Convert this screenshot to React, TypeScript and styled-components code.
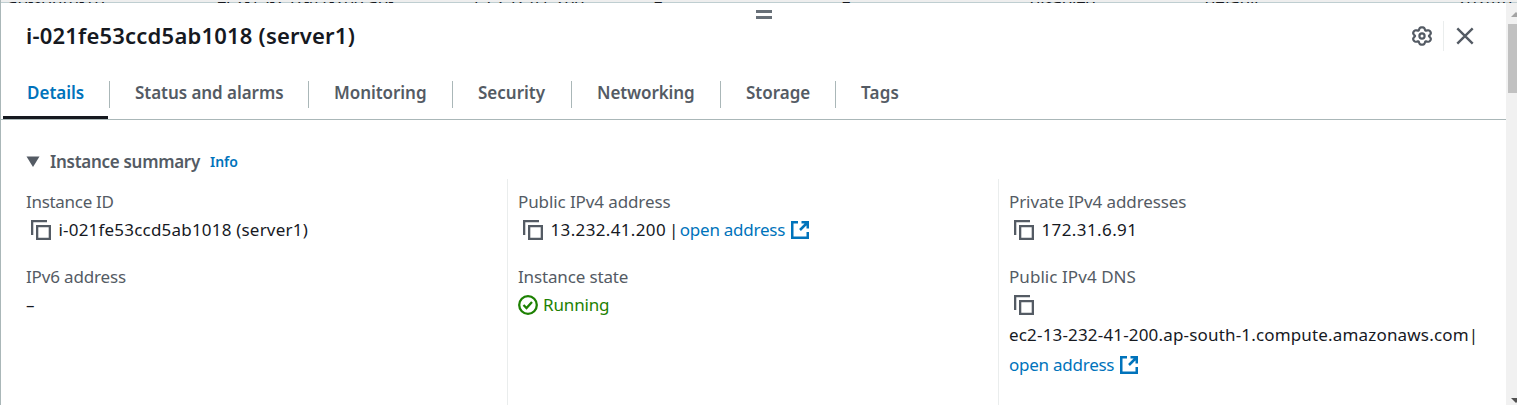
import React from "react";
import styled, { createGlobalStyle } from "styled-components";

const Global = createGlobalStyle`
  *{box-sizing:border-box}
  html,body{margin:0;height:405px;overflow:hidden;background:#fff}
  body{font-family:"Noto Sans","Open Sans",sans-serif;font-size:17px;color:#16191f}
`;

const Screen = styled.div`
  height:405px; display:flex; flex-direction:column; overflow:hidden; border-left:1px solid #aab7b8;
`;
const Strip = styled.div`
  height:3px; flex:none; background:#eeeeee; border-bottom:1px solid #bfced1; position:relative;
`;
const Behind = styled.span<{ $x: number }>`
  position:absolute; left:${p => p.$x}px; top:2px; height:1px; overflow:hidden; white-space:nowrap;
  font-size:17px; line-height:20px; color:#16191f;
  span{display:block;margin-top:-11px}
`;
const Body = styled.div`flex:1; min-height:0; display:flex;`;
const Panel = styled.main`flex:1; min-width:0; display:flex; flex-direction:column; overflow:hidden; position:relative;`;
const Grip = styled.div`
  position:absolute; left:755px; top:7px; width:16px; height:9px;
  border-top:3px solid #687078; border-bottom:3px solid #687078;
`;
const Header = styled.header`
  height:66px; flex:none; display:flex; align-items:center; justify-content:space-between; padding:0 31px 0 25px;
`;
const T = styled.span<{ $ls?: number }>`letter-spacing:${p => p.$ls ?? 0}px; white-space:pre;`;
const Title = styled.h1`margin:0; padding-bottom:2px; font-size:22px; font-weight:600; line-height:30px; white-space:nowrap;`;
const Actions = styled.div`display:flex; align-items:center; height:30px;`;
const Divider = styled.i`width:1px; height:30px; background:#eaeded; margin:0 11px;`;
const Tabs = styled.nav`
  height:51px; flex:none; display:flex; border-bottom:1px solid #aab7b8; padding-left:2px;
`;
const Tab = styled.div<{ $active?: boolean; $w: number }>`
  width:${p => p.$w}px; padding-left:24px; font-size:17px; font-weight:600; line-height:48px;
  color:${p => (p.$active ? "#0073bb" : "#545b64")};
  border-bottom:${p => (p.$active ? "3px solid #16191f" : "0")};
`;
const TabRule = styled.i`width:1px; height:27px; margin:12px 1px 0; background:#aab7b8;`;
const Summary = styled.div`
  display:flex; align-items:center; gap:10px; height:30px; margin-top:26px; padding-left:25px;
  color:#545b64; font-size:17px; font-weight:600;
`;
const Info = styled.a`color:#0073bb; font-size:14px; font-weight:600;`;
const Grid = styled.div`display:grid; grid-template-columns:506px 491px 1fr; flex:1; min-height:0; margin-top:3px;`;
const Col = styled.section<{ $first?: boolean }>`
  padding:9px 0 0 ${p => (p.$first ? 25 : 10)}px; border-left:${p => (p.$first ? "0" : "1px solid #eaeded")};
`;
const Field = styled.div<{ $lines?: number }>`height:${p => 45 + 30 * (p.$lines ?? 1)}px;`;
const Label = styled.div`color:#545b64; line-height:28px; height:28px;`;
const PeekLabel = styled(Label)`margin-top:-1px;`;
const Value = styled.div`
  display:flex; align-items:center; height:30px; margin-top:-1px; white-space:pre;
  & + & { margin-top:0; }
  ${T} { padding-bottom:2px; }
`;
const Link = styled.a`color:#0073bb; display:inline-flex; align-items:center; gap:6px;`;
const Running = styled.span`color:#1d8102; display:inline-flex; align-items:center; gap:5px;`;
const CopyBox = styled.span`display:inline-flex; margin:0 7.500px 0 5px;`;
const Scroll = styled.aside`width:11px; background:#f1f1f1; display:flex; flex-direction:column; overflow:hidden; position:relative;`;
const Thumb = styled.div`height:69px; margin:21px 0 0 2px; background:#c1c1c1; flex:none;`;
const Arrow = styled.svg<{ $bottom?: boolean }>`position:absolute; left:5px; ${p => (p.$bottom ? "bottom:2px" : "top:9px")};`;

const Copy = () => (
  <CopyBox><svg width="20" height="20" viewBox="0 0 20 20" fill="none" stroke="#545b64" strokeWidth="2.300">
    <path d="M16 1.150H1.150V15" /><path d="M6.150 6.150h12.700v12.700H6.150z" />
  </svg></CopyBox>
);
const External = () => (
  <svg width="18" height="18" viewBox="0 0 18 18" fill="none" stroke="#0073bb" strokeWidth="2.500">
    <path d="M7 1.250H1.250v15.500h15.500V11M10.500 1.250h6.250v6.250M16.500 1.500L9 9" />
  </svg>
);

// Six-lobed outline of the settings gear, centred on 10,10.
const gearPoints = Array.from({ length: 72 }, (_, i) => {
  const a = (i * Math.PI) / 36;
  const r = 7.8 + 1.2 * Math.cos(6 * a) - 0.3 * Math.cos(12 * a);
  return `${(10 + r * Math.sin(a) * 1.1).toFixed(2)},${(10 - r * Math.cos(a)).toFixed(2)}`;
}).join(" ");

const Gear = () => (
  <svg width="20" height="20" viewBox="0 0 20 20" fill="none" stroke="#545b64" strokeWidth="2.200" strokeLinejoin="round">
    <polygon points={gearPoints} /><circle cx="10" cy="10" r="2.600" />
  </svg>
);

const tabs = [
  { t: "Details", w: 105, ls: 0 },
  { t: "Status and alarms", w: 196, ls: -0.05 },
  { t: "Monitoring", w: 141, ls: -0.05 },
  { t: "Security", w: 116, ls: 0 },
  { t: "Networking", w: 146, ls: -0.1 },
  { t: "Storage", w: 112, ls: 0 },
  { t: "Tags", w: 90, ls: 0.2 },
];
const behind = [
  { x: 7, t: "ap-south-1b", ls: 0 }, { x: 216, t: "ec2-13-232-41-200.ap-...", ls: 0 }, { x: 470, t: "13.232.41.200", ls: 0.2 },
  { x: 653, t: "–", ls: 0 }, { x: 841, t: "–", ls: 0 }, { x: 1029, t: "disabled", ls: -0.2 }, { x: 1204, t: "default", ls: -0.2 }, { x: 1456, t: "2024/0", ls: 0 },
];

export default function App() {
  return (
    <>
      <Global />
      <Screen>
        <Strip>{behind.map(b => <Behind key={b.x} $x={b.x}><T $ls={b.ls}>{b.t}</T></Behind>)}</Strip>
        <Body>
          <Panel>
            <Grip />
            <Header>
              <Title><T $ls={0.21}>i-021fe53ccd5ab1018 (server1)</T></Title>
              <Actions>
                <Gear />
                <Divider />
                <svg width="20" height="20" viewBox="0 0 20 20" stroke="#545b64" strokeWidth="2.400"><path d="M2.300 2.300l15.400 15.400M17.700 2.300L2.300 17.700" /></svg>
              </Actions>
            </Header>
            <Tabs>
              {tabs.map((x, i) => (
                <React.Fragment key={x.t}>
                  {i > 0 && <TabRule />}
                  <Tab $w={x.w} $active={i === 0}><T $ls={x.ls}>{x.t}</T></Tab>
                </React.Fragment>
              ))}
            </Tabs>
            <Summary>
              <svg width="14" height="11" viewBox="0 0 14 11" fill="#545b64"><path d="M.500 .500h13L7 11z" /></svg>
              <T $ls={-0.29}>Instance summary</T>
              <Info>Info</Info>
            </Summary>
            <Grid>
              <Col $first>
                <Field><Label><T $ls={-0.3}>Instance ID</T></Label><Value><Copy /><T $ls={0.2}>i-021fe53ccd5ab1018 (server1)</T></Value></Field>
                <Field><Label><T $ls={-0.15}>IPv6 address</T></Label><Value><T>–</T></Value></Field>
              </Col>
              <Col>
                <Field><Label><T $ls={-0.1}>Public IPv4 address</T></Label><Value><Copy /><T $ls={0.35}>13.232.41.200</T><T $ls={-1.45}> | </T><Link><T $ls={-0.25}>open address</T><External /></Link></Value></Field>
                <Field $lines={3}><Label><T $ls={-0.15}>Instance state</T></Label><Value><Running>
                  <svg width="20" height="20" viewBox="0 0 20 20" fill="none" stroke="#1d8102" strokeWidth="2.300"><circle cx="10" cy="10" r="8.800" /><path d="M5.500 10l3 3 5.500-6" /></svg>
                  <T $ls={-0.15}>Running</T></Running></Value></Field>
                <PeekLabel><T $ls={-0.1}>Private IP DNS name (IPv4 only)</T></PeekLabel>
              </Col>
              <Col>
                <Field><Label><T $ls={-0.1}>Private IPv4 addresses</T></Label><Value><Copy /><T $ls={0.4}>172.31.6.91</T></Value></Field>
                <Field $lines={3}><Label><T $ls={0.06}>Public IPv4 DNS</T></Label><Value><Copy /></Value>
                  <Value><T $ls={0.17}>ec2-13-232-41-200.ap-south-1.compute.amazonaws.com</T><T>|</T></Value>
                  <Value><Link><T $ls={-0.25}>open address</T><External /></Link></Value></Field>
              </Col>
            </Grid>
          </Panel>
          <Scroll>
            <Arrow width="10" height="6" viewBox="0 0 10 6" fill="#a3a3a3"><path d="M5 0l5 5H0z" /></Arrow>
            <Thumb />
            <Arrow $bottom width="10" height="6" viewBox="0 0 10 6" fill="#505050"><path d="M5 6l5-5H0z" /></Arrow>
          </Scroll>
        </Body>
      </Screen>
    </>
  );
}
